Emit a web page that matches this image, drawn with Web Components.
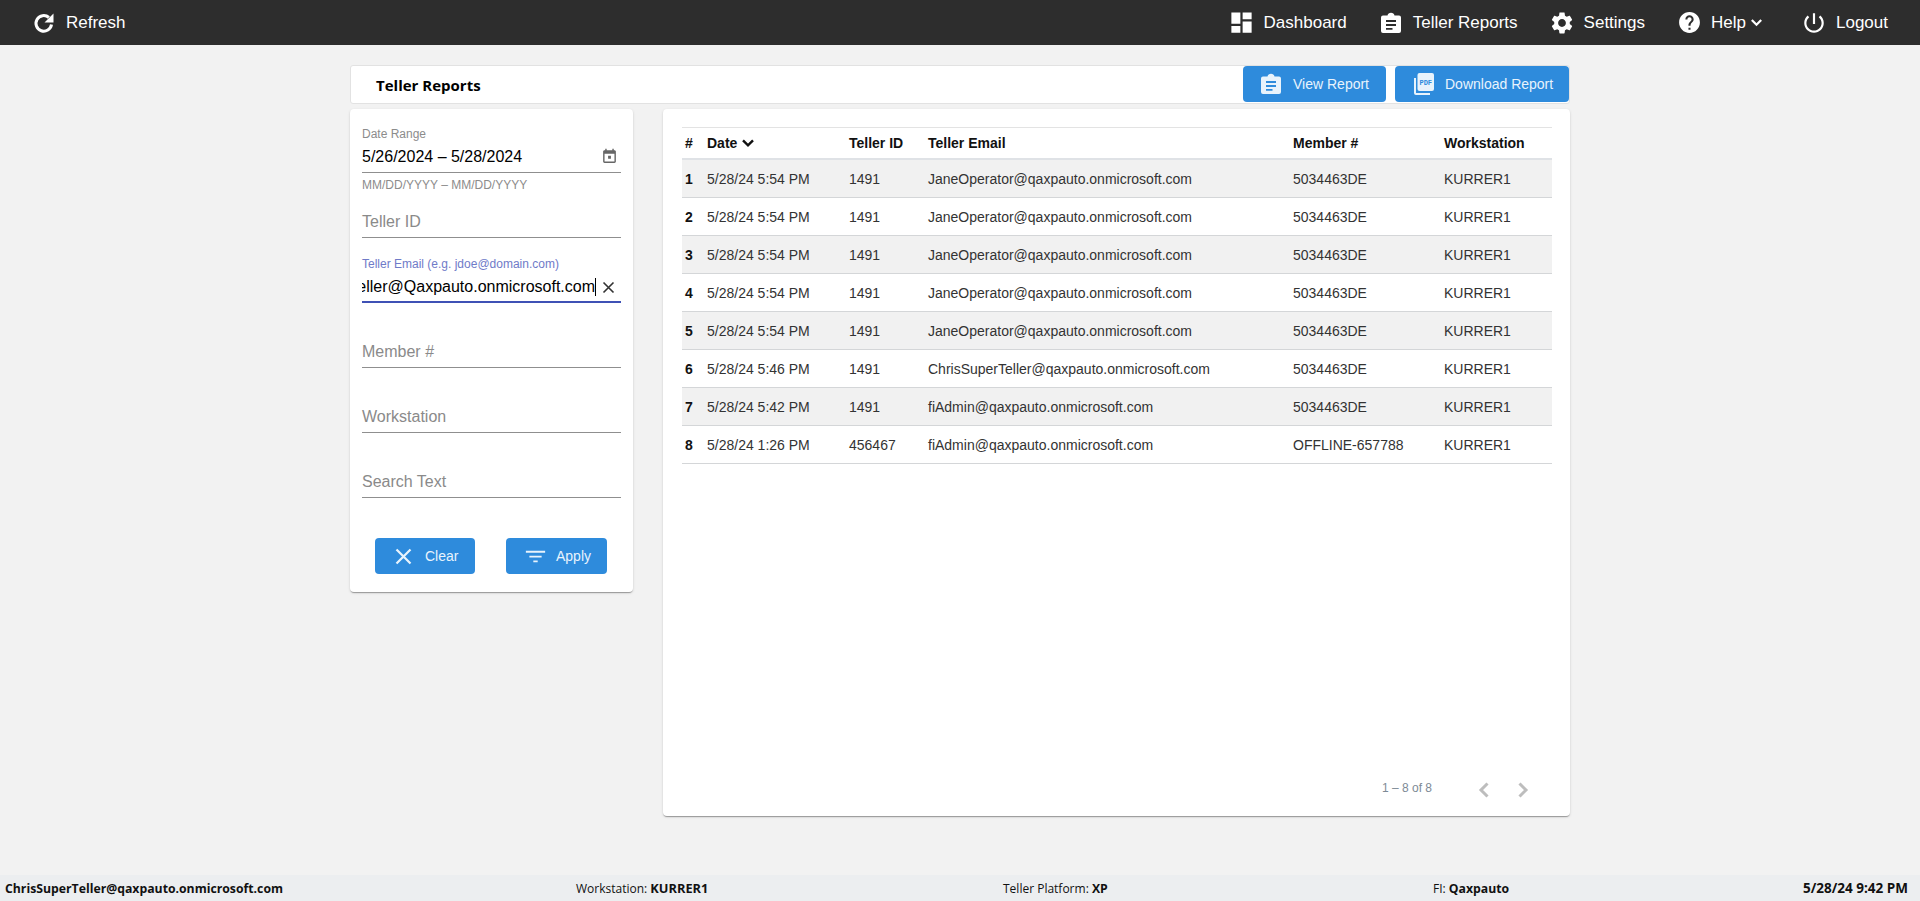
<!DOCTYPE html>
<html lang="en">
<head>
<meta charset="utf-8">
<title>Teller Reports</title>
<style>
    html, body { margin: 0; height: 100%; }
    body {
        display: flex;
        flex-direction: column;
        min-height: 100vh;
        overflow: hidden;
        background: #f2f2f2;
        font-family: "Liberation Sans", Arial, sans-serif;
    }
    main { flex: 1; display: block; }
    .wrap { width: 1220px; margin: 20px auto 0; }
    .columns { display: flex; align-items: flex-start; gap: 30px; margin-top: 5px; }
    nav-link.logout { margin-left: 6px; }
    status-bar b { font-size: 12.250px; }
    status-bar b.wide { font-size: 12.800px; }
    status-bar b.time { font-size: 13.500px; }
</style>
</head>
<body>

<app-nav>
    <nav-link slot="left" icon="refresh" size="24">Refresh</nav-link>
    <nav-link icon="dashboard" size="27">Dashboard</nav-link>
    <nav-link icon="clipboard" size="24">Teller Reports</nav-link>
    <nav-link icon="settings" size="26">Settings</nav-link>
    <nav-link icon="help" size="25" chevron>Help</nav-link>
    <nav-link class="logout" icon="power" size="26">Logout</nav-link>
</app-nav>

<main>
    <div class="wrap">
        <title-bar>
            Teller Reports
            <blue-button slot="actions" icon="clipboard" pad="16" gap="10" width="143">View Report</blue-button>
            <blue-button slot="actions" icon="pdf" pad="16" gap="10" width="174">Download Report</blue-button>
        </title-bar>
        <div class="columns">
            <filter-panel>
                <filter-field label="Date Range" value="5/26/2024 – 5/28/2024" hint="MM/DD/YYYY – MM/DD/YYYY" trailing="calendar"></filter-field>
                <filter-field placeholder="Teller ID"></filter-field>
                <filter-field label="Teller Email (e.g. jdoe@domain.com)" value="Teller@Qaxpauto.onmicrosoft.com" trailing="close" focused></filter-field>
                <filter-field placeholder="Member #"></filter-field>
                <filter-field placeholder="Workstation"></filter-field>
                <filter-field placeholder="Search Text"></filter-field>
                <blue-button slot="buttons" icon="close" pad="18" gap="11" width="100" tall>Clear</blue-button>
                <blue-button slot="buttons" icon="filter" pad="19" gap="10" width="101" tall>Apply</blue-button>
            </filter-panel>
            <report-table>
                <report-row head num="#" date="Date" teller="Teller ID" email="Teller Email" member="Member #" station="Workstation"></report-row>
                <report-row num="1" date="5/28/24 5:54 PM" teller="1491" email="JaneOperator@qaxpauto.onmicrosoft.com" member="5034463DE" station="KURRER1"></report-row>
                <report-row num="2" date="5/28/24 5:54 PM" teller="1491" email="JaneOperator@qaxpauto.onmicrosoft.com" member="5034463DE" station="KURRER1"></report-row>
                <report-row num="3" date="5/28/24 5:54 PM" teller="1491" email="JaneOperator@qaxpauto.onmicrosoft.com" member="5034463DE" station="KURRER1"></report-row>
                <report-row num="4" date="5/28/24 5:54 PM" teller="1491" email="JaneOperator@qaxpauto.onmicrosoft.com" member="5034463DE" station="KURRER1"></report-row>
                <report-row num="5" date="5/28/24 5:54 PM" teller="1491" email="JaneOperator@qaxpauto.onmicrosoft.com" member="5034463DE" station="KURRER1"></report-row>
                <report-row num="6" date="5/28/24 5:46 PM" teller="1491" email="ChrisSuperTeller@qaxpauto.onmicrosoft.com" member="5034463DE" station="KURRER1"></report-row>
                <report-row num="7" date="5/28/24 5:42 PM" teller="1491" email="fiAdmin@qaxpauto.onmicrosoft.com" member="5034463DE" station="KURRER1"></report-row>
                <report-row num="8" date="5/28/24 1:26 PM" teller="456467" email="fiAdmin@qaxpauto.onmicrosoft.com" member="OFFLINE-657788" station="KURRER1"></report-row>
            </report-table>
        </div>
    </div>
</main>

<status-bar>
    <b>ChrisSuperTeller@qaxpauto.onmicrosoft.com</b>
    <span>Workstation: <b class="wide">KURRER1</b></span>
    <span>Teller Platform: <b>XP</b></span>
    <span>FI: <b>Qaxpauto</b></span>
    <b class="time">5/28/24 9:42 PM</b>
</status-bar>

<script>
const ICONS = {
    refresh: '<path fill="none" stroke="currentColor" stroke-width="3" d="M19.5 13.5a7.8 7.8 0 1 1-2.6-7"/><path fill="currentColor" d="M21.5 2.5v9h-9z"/>',
    dashboard: '<path fill="currentColor" d="M3 13h8V3H3v10zm0 8h8v-6H3v6zm10 0h8V11h-8v10zm0-18v6h8V3h-8z"/>',
    clipboard: '<path fill="currentColor" fill-rule="evenodd" d="M4 4.500h4.500a3.600 3.600 0 0 1 7 0H20a2 2 0 0 1 2 2V20a2 2 0 0 1-2 2H4a2 2 0 0 1-2-2V6.500a2 2 0 0 1 2-2zM7 9v2h10V9zm0 4v2h10v-2zm0 4v1.800h6.500V17z"/>',
    settings: '<path fill="currentColor" d="M19.140 12.940c.04-.3.06-.61.06-.94 0-.32-.02-.64-.07-.94l2.030-1.580c.18-.14.23-.41.12-.61l-1.920-3.320c-.12-.22-.37-.29-.59-.22l-2.390.96c-.5-.38-1.030-.7-1.620-.94l-.36-2.540c-.04-.24-.24-.41-.48-.41h-3.840c-.24 0-.43.17-.47.41l-.36 2.540c-.59.24-1.130.57-1.620.94l-2.390-.96c-.22-.08-.47 0-.59.22L2.740 8.870c-.12.21-.08.47.12.61l2.030 1.580c-.05.3-.09.63-.09.94s.02.64.07.94l-2.030 1.580c-.18.14-.23.41-.12.61l1.920 3.320c.12.22.37.29.59.22l2.390-.96c.5.38 1.030.7 1.620.94l.36 2.540c.05.24.24.41.48.41h3.840c.24 0 .44-.17.47-.41l.36-2.540c.59-.24 1.130-.56 1.620-.94l2.390.96c.22.08.47 0 .59-.22l1.920-3.320c.12-.22.07-.47-.12-.61l-2.010-1.580zM12 15.600c-1.980 0-3.600-1.620-3.600-3.600s1.620-3.600 3.600-3.600 3.600 1.620 3.600 3.600-1.620 3.600-3.600 3.600z"/>',
    help: '<path fill="currentColor" d="M12 2C6.480 2 2 6.480 2 12s4.480 10 10 10 10-4.480 10-10S17.520 2 12 2zm1 17h-2v-2h2v2zm2.070-7.750l-.9.92C13.450 12.900 13 13.500 13 15h-2v-.5c0-1.100.45-2.100 1.170-2.830l1.240-1.260c.37-.36.59-.86.59-1.410 0-1.100-.9-2-2-2s-2 .9-2 2H8c0-2.210 1.790-4 4-4s4 1.790 4 4c0 .88-.36 1.680-.93 2.250z"/>',
    power: '<path fill="currentColor" d="M13 3h-2v10h2V3zm4.830 2.170l-1.420 1.420C17.990 7.860 19 9.810 19 12c0 3.870-3.130 7-7 7s-7-3.130-7-7c0-2.190 1.010-4.140 2.580-5.420L6.170 5.170C4.230 6.820 3 9.260 3 12c0 4.970 4.030 9 9 9s9-4.030 9-9c0-2.740-1.230-5.180-3.170-6.830z"/>',
    chevron: '<path fill="none" stroke="currentColor" stroke-width="3.600" d="M4.500 8l7.500 7.500L19.500 8"/>',
    left: '<path fill="none" stroke="currentColor" stroke-width="3" d="M15.500 5.500L9 12l6.500 6.500"/>',
    right: '<path fill="none" stroke="currentColor" stroke-width="3" d="M8.500 5.500L15 12l-6.500 6.500"/>',
    calendar: '<path fill="currentColor" d="M19 3h-1V1h-2v2H8V1H6v2H5c-1.110 0-2 .9-2 2v14c0 1.100.89 2 2 2h14c1.100 0 2-.9 2-2V5c0-1.100-.9-2-2-2zm0 16H5V8h14v11zM10 11h4v4h-4z"/>',
    close: '<path fill="none" stroke="currentColor" stroke-width="2.600" d="M4 4l16 16M20 4L4 20"/>',
    filter: '<path fill="currentColor" d="M1 5.500h22v2.200H1zM5 11h14v2.200H5zM9.500 16.500h5v2.200h-5z"/>',
    pdf: '<path fill="currentColor" d="M3 6h2v15h14v2H5a2 2 0 0 1-2-2z"/><rect x="6.500" y="1" width="16.500" height="18" rx="2" fill="currentColor"/><text x="14.750" y="12.500" text-anchor="middle" font-family="Liberation Mono, monospace" font-size="7" font-weight="700" fill="#2e8bdc">PDF</text>'
};

class IconGlyph extends HTMLElement
{
    connectedCallback()
    {
        const size = this.getAttribute( 'size' ) || 24;
        this.attachShadow( { mode: 'open' } );
        this.shadowRoot.innerHTML = `
        <style>
        :host { display: inline-flex; flex: none; }
        svg { display: block; }
        </style>
        <svg width="${ size }" height="${ size }" viewBox="0 0 24 24">${ ICONS[ this.getAttribute( 'name' ) ] }</svg>
        `;
    }
}
customElements.define( 'icon-glyph', IconGlyph );

class AppNav extends HTMLElement
{
    constructor()
    {
        super();
        this.attachShadow( { mode: 'open' } );
        this.shadowRoot.innerHTML = `
        <style>
        :host {
            display: flex;
            flex: none;
            align-items: center;
            height: 45px;
            padding: 0 32px;
            background: #2d2d2d;
            color: #fff;
            font: 17px "Liberation Sans", Arial, sans-serif;
        }
        .right { display: flex; align-items: center; gap: 32px; margin-left: auto; }
        </style>
        <slot name="left"></slot>
        <div class="right"><slot></slot></div>
        `;
    }
}
customElements.define( 'app-nav', AppNav );

class NavLink extends HTMLElement
{
    connectedCallback()
    {
        const chevron = this.hasAttribute( 'chevron' ) ? '<icon-glyph name="chevron" size="15"></icon-glyph>' : '';
        this.attachShadow( { mode: 'open' } );
        this.shadowRoot.innerHTML = `
        <style>
        :host { display: flex; align-items: center; gap: 10px; white-space: nowrap; }
        /* every icon sits in the same 24px box, whatever its drawn size */
        .box { display: flex; align-items: center; justify-content: center; width: 24px; height: 24px; }
        .text { display: flex; align-items: center; gap: 3px; }
        </style>
        <span class="box"><icon-glyph name="${ this.getAttribute( 'icon' ) }" size="${ this.getAttribute( 'size' ) }"></icon-glyph></span>
        <span class="text"><slot></slot>${ chevron }</span>
        `;
    }
}
customElements.define( 'nav-link', NavLink );

class TitleBar extends HTMLElement
{
    constructor()
    {
        super();
        this.attachShadow( { mode: 'open' } );
        this.shadowRoot.innerHTML = `
        <style>
        :host {
            display: flex;
            align-items: center;
            height: 39px;
            box-sizing: border-box;
            padding-left: 25px;
            background: #fff;
            border: 1px solid #e2e2e2;
            border-radius: 3px;
            color: #000;
            font: 700 15px "Open Sans", sans-serif;
        }
        .title { padding-top: 1px; }
        .actions { display: flex; align-self: flex-start; gap: 9px; margin-left: auto; }
        </style>
        <span class="title"><slot></slot></span>
        <div class="actions"><slot name="actions"></slot></div>
        `;
    }
}
customElements.define( 'title-bar', TitleBar );

class BlueButton extends HTMLElement
{
    connectedCallback()
    {
        const tall = this.hasAttribute( 'tall' );
        this.attachShadow( { mode: 'open' } );
        this.shadowRoot.innerHTML = `
        <style>
        :host {
            display: flex;
            align-items: center;
            box-sizing: border-box;
            width: ${ this.getAttribute( 'width' ) }px;
            height: 36px;
            padding-left: ${ this.getAttribute( 'pad' ) }px;
            gap: ${ this.getAttribute( 'gap' ) }px;
            background: #2e8bdc;
            border-radius: 4px;
            color: #e8f3fc;
            font: 400 14px "Liberation Sans", Arial, sans-serif;
            white-space: nowrap;
        }
        </style>
        <icon-glyph name="${ this.getAttribute( 'icon' ) }" size="${ tall ? 21 : 24 }"></icon-glyph>
        <slot></slot>
        `;
    }
}
customElements.define( 'blue-button', BlueButton );

class FilterPanel extends HTMLElement
{
    constructor()
    {
        super();
        this.attachShadow( { mode: 'open' } );
        this.shadowRoot.innerHTML = `
        <style>
        :host {
            display: block;
            flex: none;
            box-sizing: border-box;
            width: 283px;
            padding: 17px 12px 18px;
            background: #fff;
            border-radius: 4px;
            box-shadow: 0 2px 1px -1px rgba(0,0,0,.2), 0 1px 1px 0 rgba(0,0,0,.14), 0 1px 3px 0 rgba(0,0,0,.12);
        }
        .fields { display: flex; flex-direction: column; gap: 18px; }
        .buttons { display: flex; gap: 31px; margin: 40px 0 0 13px; }
        </style>
        <div class="fields"><slot></slot></div>
        <div class="buttons"><slot name="buttons"></slot></div>
        `;
    }
}
customElements.define( 'filter-panel', FilterPanel );

class FilterField extends HTMLElement
{
    connectedCallback()
    {
        const label = this.getAttribute( 'label' ) || '';
        const value = this.getAttribute( 'value' );
        const placeholder = this.getAttribute( 'placeholder' );
        const hint = this.getAttribute( 'hint' );
        const trailing = this.getAttribute( 'trailing' );
        const focused = this.hasAttribute( 'focused' );
        this.attachShadow( { mode: 'open' } );
        this.shadowRoot.innerHTML = `
        <style>
        :host { display: block; font-family: "Liberation Sans", Arial, sans-serif; }
        .label { height: 14px; padding-top: 1px; margin-bottom: -1px; font-size: 12px; line-height: 14px; color: #8c8c8c; }
        .label.focused { color: #6f7bc8; }
        .control {
            display: flex;
            align-items: center;
            height: 24px;
            margin-top: 5px;
            padding-bottom: 3px;
            border-bottom: 1px solid #8f8f8f;
            font-size: 16px;
        }
        .control.focused { padding-bottom: 2px; border-bottom: 2px solid #3f51b5; }
        .value { flex: 1; display: flex; justify-content: flex-end; min-width: 0; overflow: hidden; white-space: nowrap; color: #000; }
        .value.start { justify-content: flex-start; }
        .value span.caret { border-right: 1px solid #000; }
        .placeholder { color: #8a8a8a; }
        .hint { height: 14px; margin: 5px 0 -19px; font-size: 12px; line-height: 14px; color: #8c8c8c; }
        .calendar { margin: 0 3px 2px 4px; color: #666; }
        .x { margin: 0 5px 0 5px; color: #333; }
        </style>
        <div class="label ${ focused ? 'focused' : '' }">${ label }</div>
        <div class="control ${ focused ? 'focused' : '' }">
            ${ placeholder ? `<span class="placeholder">${ placeholder }</span>` : '' }
            ${ value ? `<div class="value ${ focused ? '' : 'start' }"><span class="${ focused ? 'caret' : '' }">${ value }</span></div>` : '' }
            ${ trailing ? `<icon-glyph class="${ trailing === 'close' ? 'x' : 'calendar' }" name="${ trailing }" size="${ trailing === 'close' ? 15 : 17 }"></icon-glyph>` : '' }
        </div>
        ${ hint ? `<div class="hint">${ hint }</div>` : '' }
        `;
    }
}
customElements.define( 'filter-field', FilterField );

class ReportTable extends HTMLElement
{
    constructor()
    {
        super();
        this.attachShadow( { mode: 'open' } );
        this.shadowRoot.innerHTML = `
        <style>
        :host {
            display: flex;
            flex-direction: column;
            flex: none;
            box-sizing: border-box;
            width: 907px;
            height: 707px;
            padding: 18px 18px 0 19px;
            background: #fff;
            border-radius: 4px;
            box-shadow: 0 2px 1px -1px rgba(0,0,0,.2), 0 1px 1px 0 rgba(0,0,0,.14), 0 1px 3px 0 rgba(0,0,0,.12);
        }
        .rows { border-top: 1px solid #e3e3e3; }
        .pager {
            display: flex;
            align-items: center;
            margin-top: auto;
            padding: 0 17px 14px 0;
            justify-content: flex-end;
            color: #7d8a96;
            font: 12px "Liberation Sans", Arial, sans-serif;
        }
        .count { margin: -5px 40px 0 0; }
        icon-glyph { color: #bdbdbd; }
        icon-glyph + icon-glyph { margin-left: 15px; }
        </style>
        <div class="rows"><slot></slot></div>
        <div class="pager">
            <span class="count">1 – 8 of 8</span>
            <icon-glyph name="left"></icon-glyph>
            <icon-glyph name="right"></icon-glyph>
        </div>
        `;
    }
}
customElements.define( 'report-table', ReportTable );

class ReportRow extends HTMLElement
{
    connectedCallback()
    {
        const head = this.hasAttribute( 'head' );
        const get = ( name ) => this.getAttribute( name );
        this.attachShadow( { mode: 'open' } );
        this.shadowRoot.innerHTML = `
        <style>
        :host {
            display: grid;
            grid-template-columns: 25px 142px 79px 365px 151px 1fr;
            align-items: center;
            box-sizing: border-box;
            height: 38px;
            border-bottom: 1px solid #d4d6d8;
            color: #333;
            font: 14px "Liberation Sans", Arial, sans-serif;
            white-space: nowrap;
        }
        :host([head]) {
            height: 32px;
            border-bottom: 2px solid #dfe2e6;
            color: #111;
            font-weight: 700;
            padding-bottom: 1px;
        }
        :host(:nth-child(even):not([head])) { background: #f1f1f1; }
        .num { padding-left: 3px; font-weight: 700; color: #111; }
        .date { display: flex; align-items: center; gap: 3px; }
        </style>
        <span class="num">${ get( 'num' ) }</span>
        <span class="date">${ get( 'date' ) }${ head ? '<icon-glyph name="chevron" size="16"></icon-glyph>' : '' }</span>
        <span>${ get( 'teller' ) }</span>
        <span>${ get( 'email' ) }</span>
        <span>${ get( 'member' ) }</span>
        <span>${ get( 'station' ) }</span>
        `;
    }
}
customElements.define( 'report-row', ReportRow );

class StatusBar extends HTMLElement
{
    constructor()
    {
        super();
        this.attachShadow( { mode: 'open' } );
        this.shadowRoot.innerHTML = `
        <style>
        :host {
            display: grid;
            flex: none;
            grid-template-columns: 571px 427px 430px 370px auto;
            align-items: center;
            height: 26px;
            padding-left: 5px;
            background: #eceef0;
            color: #111;
            font: 12px "Open Sans", sans-serif;
            white-space: nowrap;
        }
        </style>
        <slot></slot>
        `;
    }
}
customElements.define( 'status-bar', StatusBar );
</script>
</body>
</html>
